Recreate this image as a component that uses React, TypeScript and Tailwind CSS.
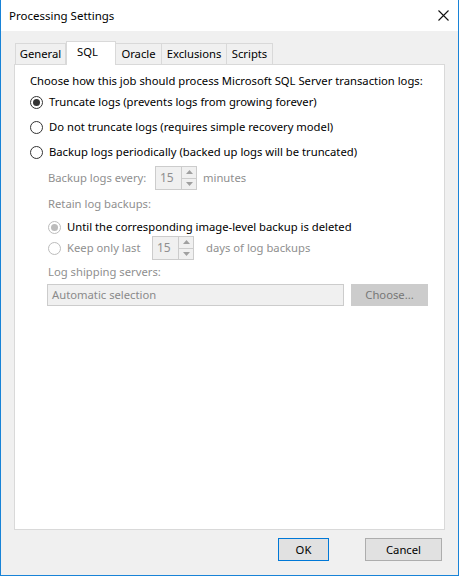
import React from "react";

const font = { fontFamily: '"Noto Sans", "Open Sans", sans-serif' };

function Radio({ checked, disabled }: { checked?: boolean; disabled?: boolean }) {
  return (
    <span
      className={`inline-flex items-center justify-center w-[13px] h-[13px] rounded-full border bg-white shrink-0 ${
        disabled ? "border-[#bcbcbc]" : "border-[#333333]"
      }`}
    >
      {checked && (
        <span className={`w-[7px] h-[7px] rounded-full ${disabled ? "bg-[#bcbcbc]" : "bg-[#333333]"}`} />
      )}
    </span>
  );
}

function Spin({ value }: { value: string }) {
  return (
    <div className="flex items-stretch w-[42px] h-[24px] border border-[#cccccc] bg-[#f0f0f0] shrink-0">
      <div className="flex-1 flex items-center pl-[4px] text-[#8f8f8f] text-[12px]">{value}</div>
      <div className="w-[15px] flex flex-col border-l border-[#cccccc]">
        <div className="flex-1 flex items-center justify-center border-b border-[#cccccc]">
          <svg width="7" height="4" viewBox="0 0 7 4"><path d="M0 4 L3.5 0 L7 4 Z" fill="#a0a0a0" /></svg>
        </div>
        <div className="flex-1 flex items-center justify-center">
          <svg width="7" height="4" viewBox="0 0 7 4"><path d="M0 0 L3.5 4 L7 0 Z" fill="#a0a0a0" /></svg>
        </div>
      </div>
    </div>
  );
}

export default function App() {
  const tabs = [
    { label: "General", w: 51 },
    { label: "SQL", w: 50, active: true },
    { label: "Oracle", w: 46 },
    { label: "Exclusions", w: 65 },
    { label: "Scripts", w: 46 },
  ];
  return (
    <div
      className="w-[459px] h-[576px] flex flex-col bg-[#f0f0f0] border-x border-b border-[#1883d7] text-[11.25px] text-[#000] leading-none overflow-hidden relative whitespace-nowrap"
      style={font}
    >
      <div className="h-[31px] bg-white flex items-center justify-between pl-[8px] pr-[9px] shrink-0">
        <span className="text-black text-[11.5px]">Processing Settings</span>
        <svg width="11" height="11" viewBox="0 0 11 11">
          <path d="M0.5 0.5 L10.5 10.5 M10.5 0.5 L0.5 10.5" stroke="#111" strokeWidth="1.1" />
        </svg>
      </div>
      <div className="pl-[13px] pr-[13px] pt-[11px] flex flex-col">
        <div className="flex items-end h-[22px] pl-[1px] relative z-10">
          {tabs.map((t, i) =>
            t.active ? (
              <div
                key={i}
                className="h-[24px] -mb-[1px] bg-white border border-[#d9d9d9] border-b-0 flex items-start pt-[4px] pl-[10px]"
                style={{ width: t.w }}
              >
                {t.label}
              </div>
            ) : (
              <div
                key={i}
                className={`h-[21px] bg-[#f0f0f0] border border-[#d9d9d9] border-b-0 flex items-center justify-center ${
                  i > 1 ? "border-l-0" : ""
                }`}
                style={{ width: t.w }}
              >
                {t.label}
              </div>
            )
          )}
        </div>
        <div className="h-[466px] bg-white border border-[#d9d9d9] pl-[15px] pt-[9px] flex flex-col">
          <div className="h-[14px] flex items-center">
            Choose how this job should process Microsoft SQL Server transaction logs:
          </div>
          <div className="mt-[7px] flex items-center gap-[6px] h-[14px]">
            <Radio checked />
            <span>Truncate logs (prevents logs from growing forever)</span>
          </div>
          <div className="mt-[11px] flex items-center gap-[6px] h-[14px]">
            <Radio />
            <span>Do not truncate logs (requires simple recovery model)</span>
          </div>
          <div className="mt-[11px] flex items-center gap-[6px] h-[14px]">
            <Radio />
            <span>Backup logs periodically (backed up logs will be truncated)</span>
          </div>
          <div className="pl-[18px] flex flex-col text-[#8f8f8f]">
            <div className="mt-[7px] flex items-center h-[24px]">
              <span className="w-[107px]">Backup logs every:</span>
              <Spin value="15" />
              <span className="ml-[6px]">minutes</span>
            </div>
            <div className="mt-[7px] h-[14px] flex items-center">Retain log backups:</div>
            <div className="mt-[9px] flex items-center gap-[6px] h-[14px]">
              <Radio checked disabled />
              <span className="text-black">Until the corresponding image-level backup is deleted</span>
            </div>
            <div className="mt-[2px] flex items-center gap-[6px] h-[24px]">
              <Radio disabled />
              <span className="w-[79px]">Keep only last</span>
              <Spin value="15" />
              <span className="ml-[6px]">days of log backups</span>
            </div>
            <div className="mt-[5px] h-[14px] flex items-center">Log shipping servers:</div>
            <div className="mt-[5px] flex items-center h-[22px] -ml-[1px]">
              <div className="w-[297px] h-[22px] border border-[#cccccc] bg-[#f0f0f0] flex items-center pl-[4px] text-[#8a8a8a]">
                Automatic selection
              </div>
              <div className="ml-[7px] w-[77px] h-[22px] bg-[#cccccc] border border-[#cccccc] flex items-center justify-center text-[#777777]">
                Choose...
              </div>
            </div>
          </div>
        </div>
      </div>
      <div className="flex justify-end gap-[36px] pr-[16px] mt-[8px]">
        <div className="w-[51px] h-[23px] bg-[#e1e1e1] border border-[#0078d7] flex items-center justify-center">OK</div>
        <div className="w-[77px] h-[23px] bg-[#e1e1e1] border border-[#adadad] flex items-center justify-center">Cancel</div>
      </div>
    </div>
  );
}
